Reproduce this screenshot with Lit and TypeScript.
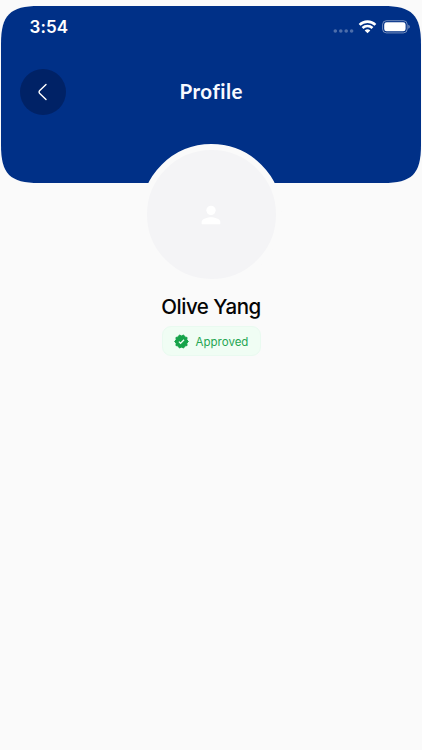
import { LitElement, html, css } from "lit";
import { customElement, property } from "lit/decorators.js";

@customElement("status-bar")
class StatusBar extends LitElement {
  @property() time = "";
  static styles = css`
    :host { display: flex; height: 42px; align-items: center; justify-content: space-between; padding: 0 10px 0 28.5px; color: #fff; }
    .time { font: 600 17px/20px Inter, sans-serif; letter-spacing: 0.1px; }
    svg { display: block; }
  `;
  render() {
    return html`
      <span class="time">${this.time}</span>
      <svg width="80" height="16" viewBox="0 0 80 16">
        <g fill="#fff" fill-opacity=".3">
          <circle cx="4.3" cy="12" r="1.8" /><circle cx="9.8" cy="12" r="1.8" />
          <circle cx="15.2" cy="12" r="1.8" /><circle cx="20.6" cy="12" r="1.8" />
        </g>
        <g fill="none" stroke="#fff" stroke-width="2.6">
          <path d="M28.6 5.9a11.2 11.2 0 0 1 15.8 0" />
          <path d="M31.5 9a7.1 7.1 0 0 1 10 0" />
        </g>
        <path d="M33.7 11.5a4 4 0 0 1 5.6 0L36.5 14.2z" fill="#fff" />
        <rect x="51.6" y="1.7" width="24.6" height="12.2" rx="3.8" fill="none" stroke="#fff" stroke-opacity=".45" />
        <rect x="53.2" y="3.3" width="21.4" height="9" rx="2.4" fill="#fff" />
        <path d="M77.4 5.8c1.7.6 1.7 3.4 0 4z" fill="#fff" fill-opacity=".55" />
      </svg>
    `;
  }
}

@customElement("profile-header")
class ProfileHeader extends LitElement {
  @property() heading = "";
  static styles = css`
    :host { display: block; position: relative; height: 177px; }
    .shape { position: absolute; inset: 0; width: 100%; height: 100%; }
    .content { position: relative; }
    .bar { display: grid; grid-template-columns: 46px 1fr 46px; align-items: center; padding: 20.5px 18px 0 18.5px; }
    .back { display: flex; width: 46px; height: 46px; padding: 0; border: 0; border-radius: 50%; background: #002266; align-items: center; justify-content: center; }
    .title { margin: -1px 0 0; text-align: center; color: #f8faff; font: 700 20.5px/28px Lato, sans-serif; letter-spacing: 0.5px; }
  `;
  render() {
    return html`
      <svg class="shape" viewBox="0 0 420 177" preserveAspectRatio="none">
        <path fill="#003087" d="M38 0H382C411 0 420 9 420 38V139C420 168 411 177 382 177H38C9 177 0 168 0 139V38C0 9 9 0 38 0Z" />
      </svg>
      <div class="content">
        <status-bar time="3:54"></status-bar>
        <div class="bar">
          <button class="back" aria-label="Back">
            <svg width="24" height="24" viewBox="0 0 24 24" fill="none" stroke="#fff" stroke-width="1.4" stroke-linecap="round" stroke-linejoin="round">
              <path d="M15 4.400 8.500 10.800Q7.500 12 8.500 13.200L15 19.600" />
            </svg>
          </button>
          <h1 class="title">${this.heading}</h1>
        </div>
      </div>
    `;
  }
}

@customElement("app-root")
class AppRoot extends LitElement {
  static styles = css`
    :host { display: block; box-sizing: border-box; height: 750px; padding: 6px 1px 0; background: #fafafa; overflow: hidden; }
    .profile { display: flex; flex-direction: column; align-items: center; margin-top: -39px; position: relative; }
    .avatar { display: flex; box-sizing: border-box; width: 141px; height: 141px; border: 6px solid #fafafa; border-radius: 50%; background: #f4f4f6; align-items: center; justify-content: center; }
    .name { margin: 8px 0 0; color: #050505; font: 500 20.5px/28px Inter, sans-serif; letter-spacing: -0.48px; }
    .badge { display: flex; box-sizing: border-box; width: 99px; height: 30px; margin-top: 5px; gap: 7px; align-items: center; justify-content: center; border: 1px solid #e9faf0; border-radius: 9px; background: #f0fdf4; color: #25a653; font: 400 11.5px/16px Inter, sans-serif; }
    .badge span { padding-top: 1px; }
  `;
  render() {
    return html`
      <profile-header heading="Profile"></profile-header>
      <main class="profile">
        <div class="avatar">
          <svg width="28" height="28" viewBox="0 0 24 24" fill="#fff">
            <circle cx="12" cy="8" r="4" /><path d="M4 20v-2c0-2.7 5.3-4 8-4s8 1.300 8 4v2z" />
          </svg>
        </div>
        <h2 class="name">Olive Yang</h2>
        <div class="badge">
          <svg width="15" height="15" viewBox="0 0 24 24" fill="#16a34a">
            <path d="M23 12l-2.440-2.780.34-3.680-3.610-.82-1.890-3.180L12 3 8.600 1.540 6.710 4.720l-3.610.81.34 3.680L1 12l2.440 2.780-.34 3.690 3.610.82 1.890 3.180L12 21l3.400 1.460 1.890-3.180 3.610-.82-.34-3.680z" stroke="#16a34a" stroke-width="1.500" stroke-linejoin="round" />
            <path d="m7.800 12.200 2.700 2.700 5.600-5.600" fill="none" stroke="#f0fdf4" stroke-width="2" />
          </svg>
          <span>Approved</span>
        </div>
      </main>
    `;
  }
}
